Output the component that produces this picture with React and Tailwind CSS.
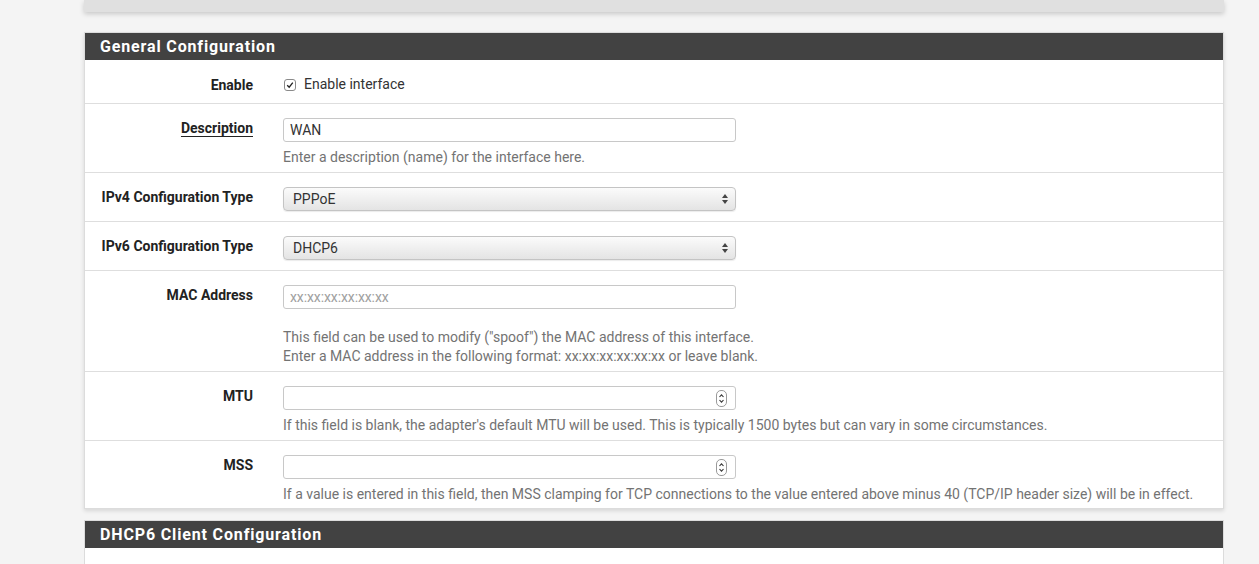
import React from "react";

function Arrows() {
  return (
    <svg width="8" height="12" viewBox="0 0 8 12" className="shrink-0">
      <path d="M4 1 L7 5 L1 5 Z" fill="#444" />
      <path d="M4 11 L7 7 L1 7 Z" fill="#444" />
    </svg>
  );
}

function Spinner() {
  return (
    <div className="w-[11px] h-[17px] border border-[#9a9a9a] rounded-[5px] flex items-center justify-center shrink-0">
      <svg width="7" height="13" viewBox="0 0 7 13">
        <path d="M1.5 5 L3.5 2.8 L5.5 5" stroke="#333" strokeWidth="1.1" fill="none" />
        <path d="M1.5 8 L3.5 10.2 L5.5 8" stroke="#333" strokeWidth="1.1" fill="none" />
      </svg>
    </div>
  );
}

function Row({ label, underline, children, className }) {
  return (
    <div className={"flex border-t border-[#dedede] " + (className || "")}>
      <div className="w-[183px] shrink-0 pr-[15px] text-right leading-[19px]">
        <span
          className={
            "text-[14px] font-bold text-[#222] " +
            (underline ? "underline underline-offset-[3px] decoration-[1px]" : "")
          }
        >
          {label}
        </span>
      </div>
      <div className="pl-[15px] flex-1">{children}</div>
    </div>
  );
}

function TextBox({ value, placeholder }) {
  return (
    <div className="w-[453px] h-[24px] border border-[#c8c8c8] rounded-[3px] bg-white flex items-center px-[6px]">
      {value ? (
        <span className="text-[14px] text-[#333]">{value}</span>
      ) : (
        <span className="text-[14px] text-[#a0a0a0] tracking-[-0.1px]">{placeholder}</span>
      )}
    </div>
  );
}

function SelectBox({ value }) {
  return (
    <div className="w-[453px] h-[24px] border border-[#c4c4c4] rounded-[4px] bg-gradient-to-b from-[#fbfbfb] to-[#e4e4e4] flex items-center justify-between pl-[9px] pr-[6px] shadow-[0_1px_1px_rgba(0,0,0,0.08)]">
      <span className="text-[14px] text-[#333]">{value}</span>
      <Arrows />
    </div>
  );
}

function NumberBox() {
  return (
    <div className="w-[453px] h-[24px] border border-[#c8c8c8] rounded-[3px] bg-white flex items-center justify-end pr-[8px]">
      <Spinner />
    </div>
  );
}

function Help({ children }) {
  return <div className="text-[14px] text-[#737373] leading-[19px] mt-[6px]">{children}</div>;
}

export default function App() {
  return (
    <div className="min-h-screen bg-[#f4f4f4] font-['Roboto',sans-serif] overflow-hidden">
      <div className="ml-[84px] w-[1140px]">
        <div className="h-[12px] bg-[#e0e0e0] shadow-[0_2px_5px_rgba(0,0,0,0.18)]" />

        <div className="mt-[20px] border border-[#dcdcdc] bg-white shadow-[0_2px_4px_rgba(0,0,0,0.12)]">
          <div className="h-[27px] bg-[#424242] flex items-center pl-[15px]">
            <span className="text-[16px] font-bold text-white tracking-[0.85px]">General Configuration</span>
          </div>

          <Row label="Enable" className="h-[43px] pt-[15px] !border-t-0">
            <div className="flex items-center gap-[8px] pl-[1px] h-[19px]">
              <div className="w-[12px] h-[12px] border border-[#8a8a8a] rounded-[3px] flex items-center justify-center">
                <svg width="8" height="8" viewBox="0 0 8 8">
                  <path d="M1.2 4.2 L3.2 6.2 L6.8 1.6" stroke="#222" strokeWidth="1.3" fill="none" />
                </svg>
              </div>
              <span className="text-[14px] text-[#333]">Enable interface</span>
            </div>
          </Row>

          <Row label="Description" underline className="h-[69px] pt-[14px]">
            <TextBox value="WAN" />
            <Help>Enter a description (name) for the interface here.</Help>
          </Row>

          <Row label="IPv4 Configuration Type" className="h-[49px] pt-[14px]">
            <SelectBox value="PPPoE" />
          </Row>

          <Row label="IPv6 Configuration Type" className="h-[49px] pt-[14px]">
            <SelectBox value="DHCP6" />
          </Row>

          <Row label="MAC Address" className="h-[101px] pt-[14px]">
            <TextBox placeholder="xx:xx:xx:xx:xx:xx" />
            <div className="text-[14px] text-[#737373] leading-[19px] mt-[19px]">
              This field can be used to modify ("spoof") the MAC address of this interface.
              <br />
              Enter a MAC address in the following format: xx:xx:xx:xx:xx:xx or leave blank.
            </div>
          </Row>

          <Row label="MTU" className="h-[69px] pt-[14px]">
            <NumberBox />
            <Help>
              If this field is blank, the adapter's default MTU will be used. This is typically 1500 bytes but can vary in some circumstances.
            </Help>
          </Row>

          <Row label="MSS" className="h-[68px] pt-[14px]">
            <NumberBox />
            <Help>
              If a value is entered in this field, then MSS clamping for TCP connections to the value entered above minus 40 (TCP/IP header size) will be in effect.
            </Help>
          </Row>
        </div>

        <div className="mt-[11px] border border-[#dcdcdc] bg-white">
          <div className="h-[27px] bg-[#424242] flex items-center pl-[15px]">
            <span className="text-[16px] font-bold text-white tracking-[0.85px]">DHCP6 Client Configuration</span>
          </div>
          <div className="h-[60px]" />
        </div>
      </div>
    </div>
  );
}
